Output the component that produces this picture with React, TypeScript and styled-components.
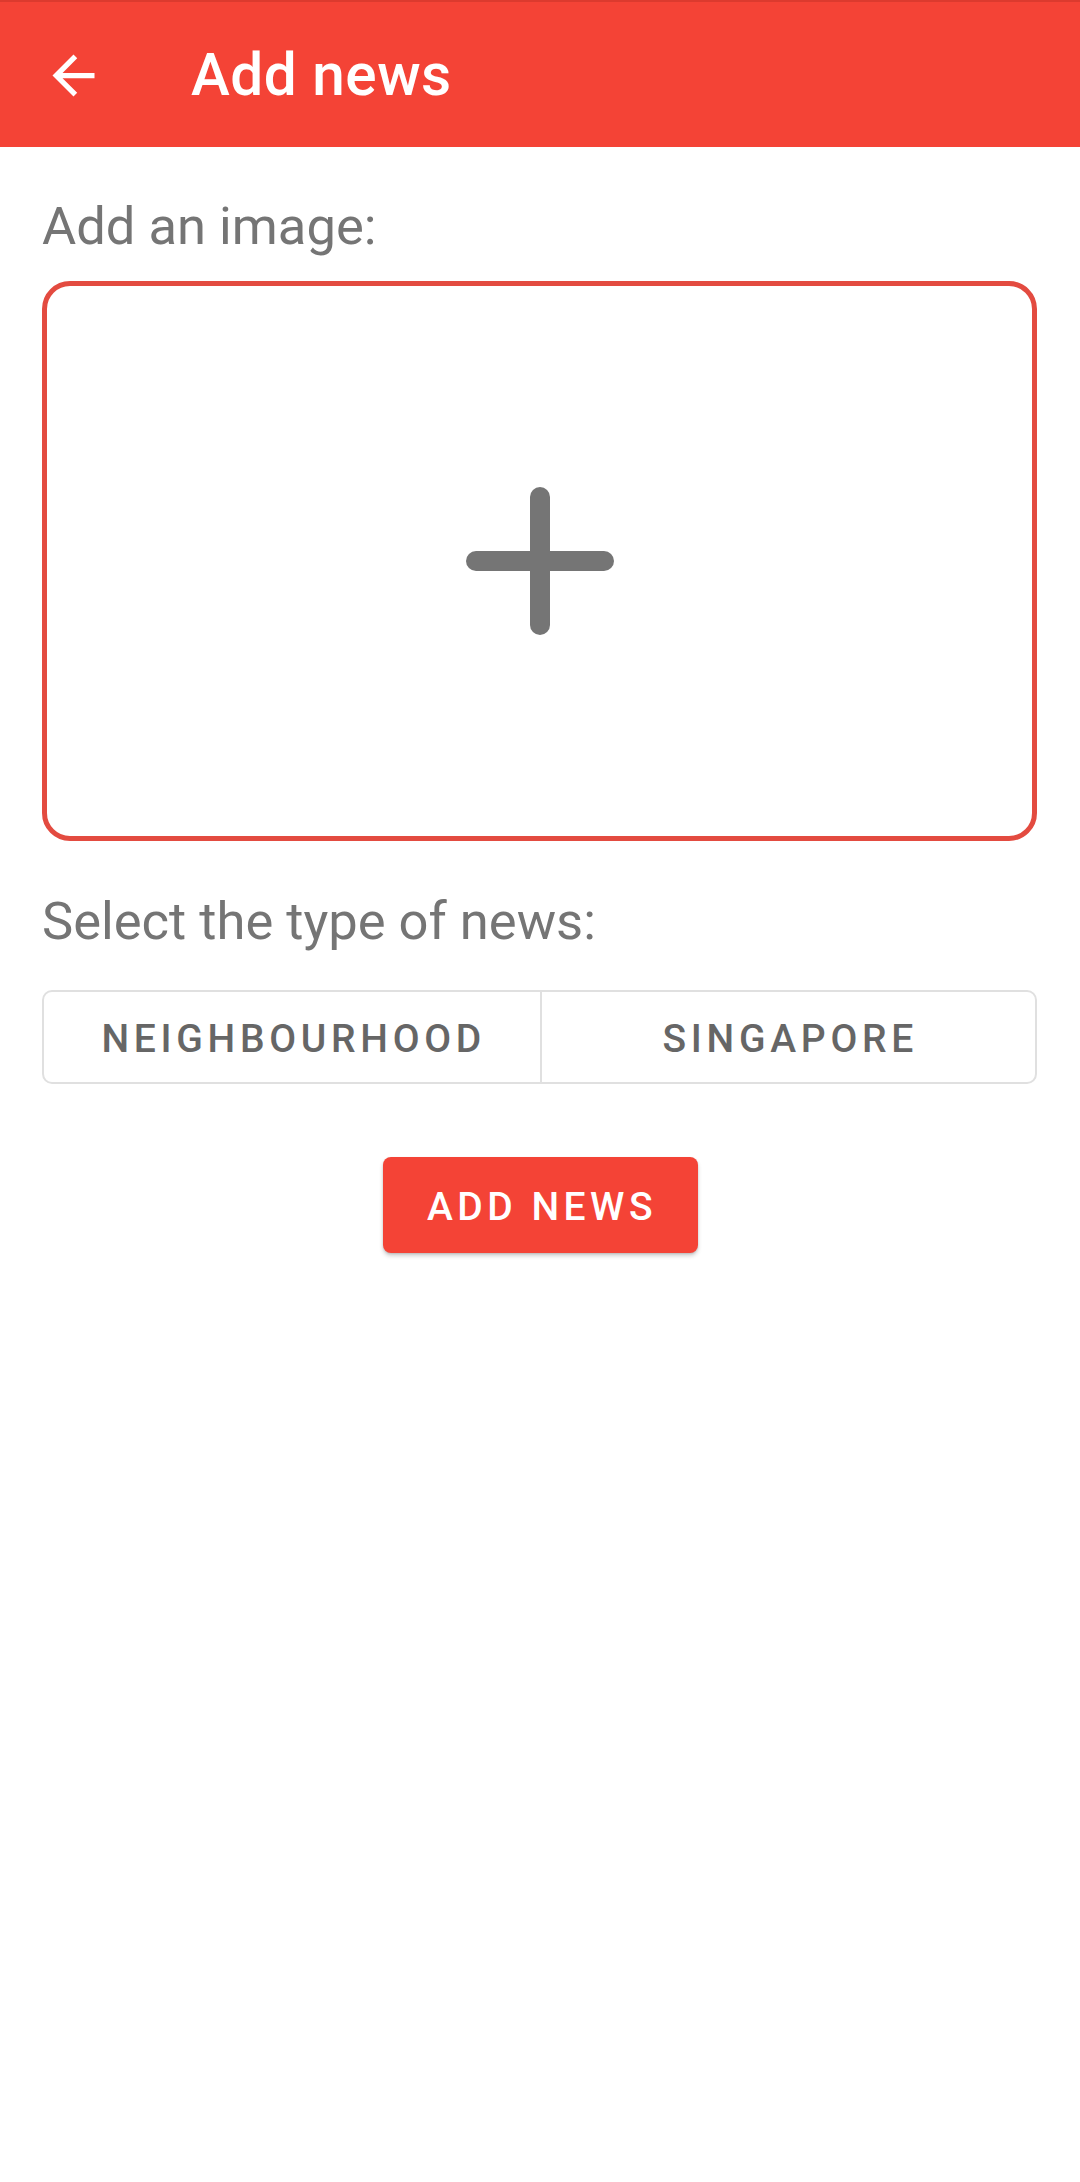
import React from "react";
import styled, { createGlobalStyle } from "styled-components";

const Global = createGlobalStyle`
  html, body { margin: 0; padding: 0; background: #ffffff; }
  body { font-family: Roboto, "Noto Sans", "Liberation Sans", sans-serif; }
  * { box-sizing: border-box; }
`;

const Page = styled.div`
  width: 1080px;
  min-height: 2182px;
  background: #ffffff;
  display: flex;
  flex-direction: column;
`;

const AppBar = styled.header`
  height: 147px;
  background: #f44336;
  border-top: 2px solid #dc3a2e;
  display: flex;
  align-items: center;
  padding-left: 42px;
`;

const BackButton = styled.div`
  width: 63px;
  height: 63px;
  display: flex;
  align-items: center;
  justify-content: center;
  margin-top: 1px;
`;

const Title = styled.h1`
  margin: 0 0 0 86px;
  font-family: Roboto, sans-serif;
  font-weight: 500;
  font-size: 58.5px;
  color: #ffffff;
  letter-spacing: 0.5px;
`;

const Content = styled.main`
  padding: 48px 43px 0 42px;
  display: flex;
  flex-direction: column;
`;

const Label = styled.div<{ $gap: number }>`
  font-family: Roboto, sans-serif;
  font-size: 52.5px;
  line-height: 62px;
  color: #757575;
  margin-bottom: ${(p) => p.$gap}px;
`;

const ImagePicker = styled.div`
  height: 560px;
  border: 5px solid #e34b40;
  border-radius: 28px;
  display: flex;
  align-items: center;
  justify-content: center;
  margin-bottom: 49px;
`;

const Toggle = styled.div`
  height: 94px;
  display: grid;
  grid-template-columns: 1fr 1fr;
  border: 2.5px solid #e0e0e0;
  border-radius: 10px;
  overflow: hidden;
`;

const ToggleItem = styled.div<{ $divider?: boolean }>`
  display: flex;
  align-items: center;
  justify-content: center;
  font-family: Roboto, sans-serif;
  font-weight: 500;
  font-size: 39px;
  letter-spacing: 4.7px;
  color: #666666;
  border-left: ${(p) => (p.$divider ? "2.5px solid #e0e0e0" : "none")};
  padding: 3px 0 0 4px;
`;

const ButtonRow = styled.div`
  display: flex;
  justify-content: center;
  margin-top: 73px;
  padding-left: 1px;
`;

const PrimaryButton = styled.button`
  width: 315px;
  height: 96px;
  border: none;
  border-radius: 8px;
  background: #f44336;
  color: #ffffff;
  font-family: Roboto, sans-serif;
  font-weight: 500;
  font-size: 39px;
  letter-spacing: 4.5px;
  box-shadow: 0 3px 4px rgba(0, 0, 0, 0.18), 0 1px 2px rgba(0, 0, 0, 0.12);
  display: flex;
  align-items: center;
  justify-content: center;
  padding: 3px 0 0 4px;
`;

export default function App() {
  return (
    <Page>
      <Global />
      <AppBar>
        <BackButton>
          <svg width="63" height="63" viewBox="0 0 24 24" fill="#ffffff">
            <path d="M20 11H7.83l5.59-5.59L12 4l-8 8 8 8 1.41-1.41L7.83 13H20v-2z" />
          </svg>
        </BackButton>
        <Title>Add news</Title>
      </AppBar>
      <Content>
        <Label $gap={24}>Add an image:</Label>
        <ImagePicker>
          <svg width="148" height="148" viewBox="0 0 148 148">
            <g stroke="#757575" strokeWidth="20" strokeLinecap="round">
              <line x1="74" y1="10" x2="74" y2="138" />
              <line x1="10" y1="74" x2="138" y2="74" />
            </g>
          </svg>
        </ImagePicker>
        <Label $gap={38}>Select the type of news:</Label>
        <Toggle>
          <ToggleItem>NEIGHBOURHOOD</ToggleItem>
          <ToggleItem $divider>SINGAPORE</ToggleItem>
        </Toggle>
        <ButtonRow>
          <PrimaryButton>ADD NEWS</PrimaryButton>
        </ButtonRow>
      </Content>
    </Page>
  );
}
